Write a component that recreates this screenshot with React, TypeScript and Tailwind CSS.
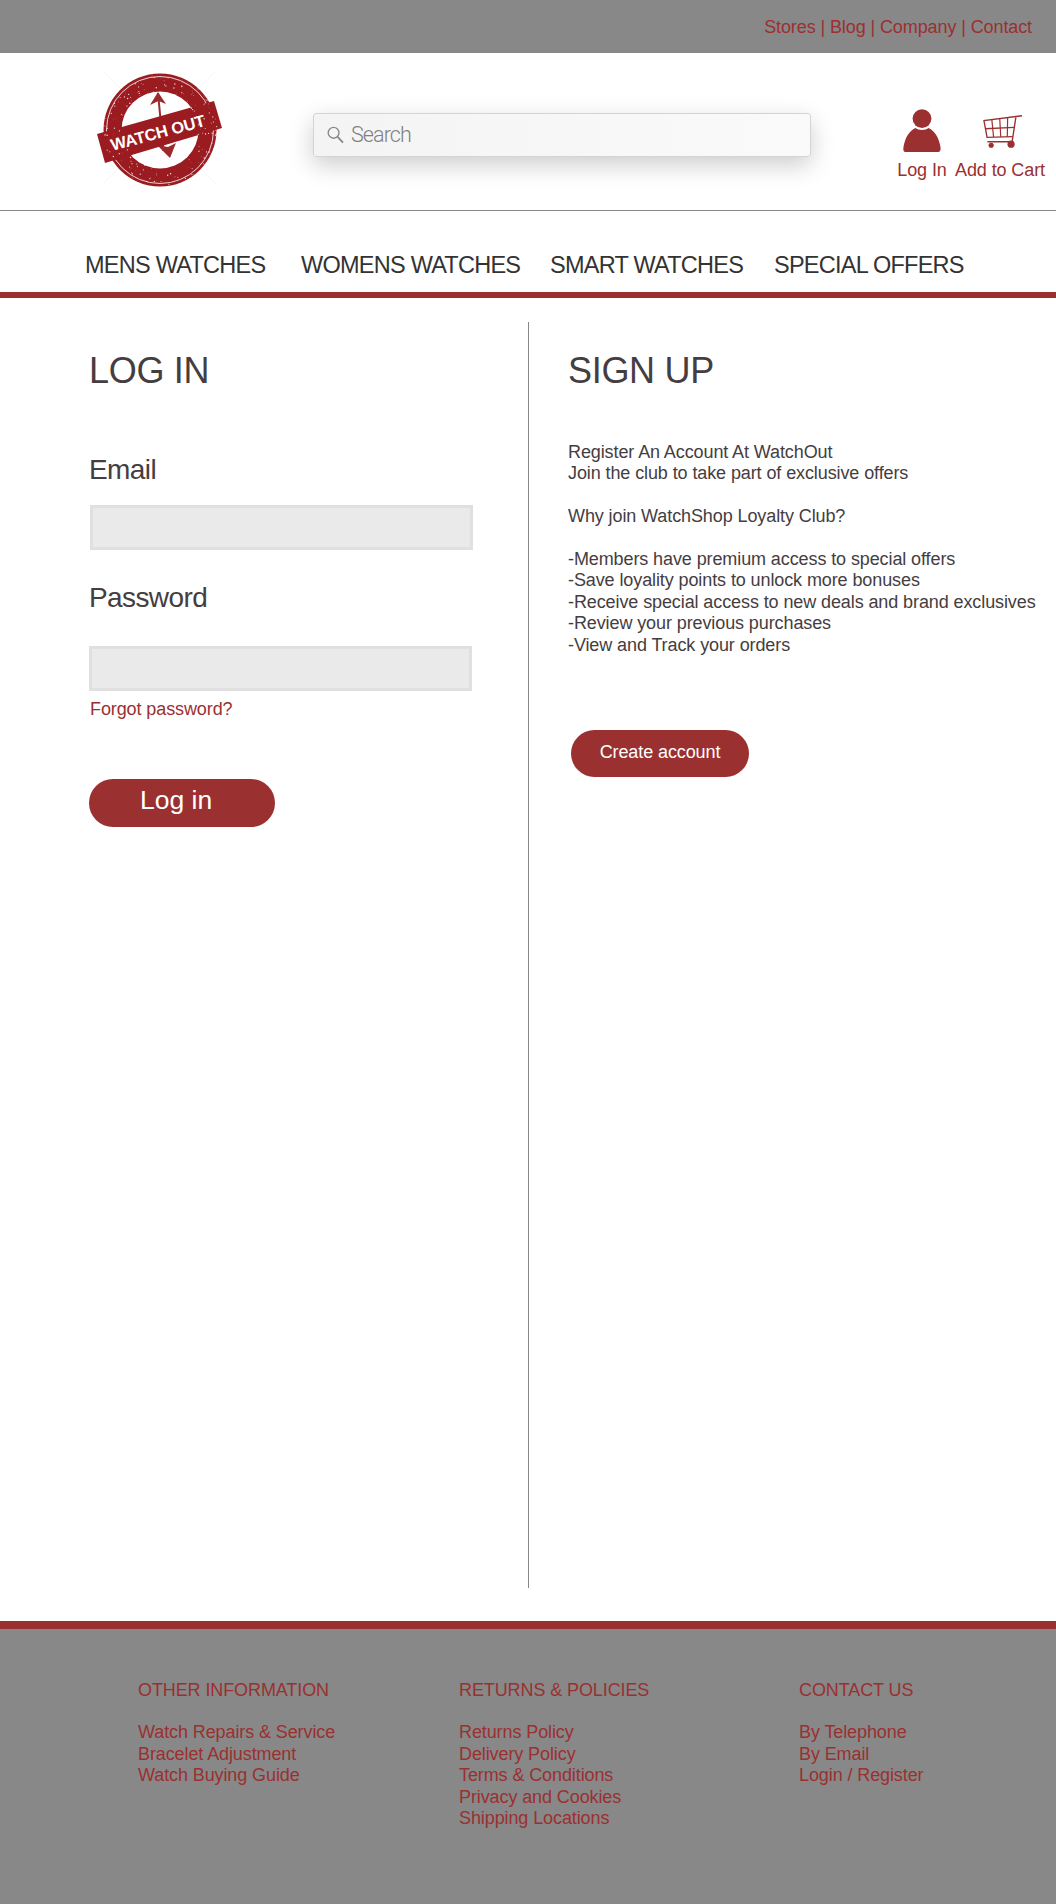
const font = "font-['Liberation_Sans',Arial,sans-serif]";

function seeded(n: number) {
  let s = 7919;
  const out: number[][] = [];
  for (let i = 0; i < n; i++) {
    s = (s * 16807) % 2147483647;
    const a = (s % 6283) / 1000;
    s = (s * 16807) % 2147483647;
    const r = 38 + (s % 1900) / 100;
    s = (s * 16807) % 2147483647;
    out.push([160 + Math.cos(a) * r, 129 + Math.sin(a) * r, 0.2 + (s % 55) / 100]);
  }
  return out;
}

function Logo() {
  const specks = seeded(170);
  return (
    <svg width="140" height="140" viewBox="90 60 140 140" className="shrink-0">
      <path d="M104 71 L215 182 M215 71 L104 182" stroke="#f5f5f5" strokeWidth="1" />
      <circle cx="160" cy="129" r="56.5" fill="#9a1c20" />
      <circle cx="160" cy="129" r="53.5" fill="none" stroke="#fff" strokeWidth="0.8" />
      <circle cx="160" cy="129" r="38.5" fill="#fff" />
      <path d="M158 92 L163.5 150" stroke="#9a2a2c" strokeWidth="2" />
      <path d="M158 91 L166 103 L158.5 100 L150 104 Z" fill="#9a2a2c" />
      <path d="M170 157 L157 144 L168 146 L176 142 Z" fill="#9a2a2c" />
      <path d="M97 133 L214 100 L222 127 L105 162 Z" fill="#9a1c20" />
      {specks.map((p, i) => (
        <circle key={i} cx={p[0]} cy={p[1]} r={p[2]} fill="#fff" opacity="0.85" />
      ))}
      <text
        x="158"
        y="137.5"
        textAnchor="middle"
        transform="rotate(-15 158 132)"
        fill="#fff"
        fontFamily="'Liberation Sans', Arial, sans-serif"
        fontWeight="700"
        fontSize="16.5"
        textLength="97"
        lengthAdjust="spacing"
      >
        WATCH OUT
      </text>
    </svg>
  );
}

function UserIcon() {
  return (
    <svg width="38" height="44" viewBox="0 0 38 44" fill="#9b3030">
      <circle cx="19" cy="9.6" r="9.4" />
      <path d="M3 43 C0.5 43 0 41 0.5 38 C2 29 6 22 12.5 19 C15 21.5 23 21.5 25.5 19 C32 22 36 29 37.5 38 C38 41 37 43 35 43 Z" />
    </svg>
  );
}

function CartIcon() {
  return (
    <svg width="44" height="36" viewBox="305 60 125 105" fill="none" stroke="#9b3030" strokeWidth="4">
      <path d="M423 65 L312 79 L321 128 L396 126" />
      <path d="M405 70 L394 141 L322 141" />
      <path d="M315 103 L400 99" />
      <path d="M335 77 L340 127 M358 74 L361 127 M381 71 L380 127" strokeWidth="3.5" />
      <circle cx="333" cy="151" r="7.5" fill="#9b3030" stroke="none" />
      <circle cx="391" cy="148" r="10.5" fill="#9b3030" stroke="none" />
    </svg>
  );
}

function SearchIcon() {
  return (
    <svg width="17" height="18" viewBox="0 0 17 18" fill="none" stroke="#8a8a8a" strokeWidth="1.4">
      <circle cx="6.6" cy="6.8" r="5.4" />
      <path d="M10.6 10.8 L16 16.6" strokeWidth="1.9" />
    </svg>
  );
}

const footerCols = [
  { title: "OTHER INFORMATION", width: "w-[321px]", links: ["Watch Repairs & Service", "Bracelet Adjustment", "Watch Buying Guide"] },
  { title: "RETURNS & POLICIES", width: "w-[340px]", links: ["Returns Policy", "Delivery Policy", "Terms & Conditions", "Privacy and Cookies", "Shipping Locations"] },
  { title: "CONTACT US", width: "w-[200px]", links: ["By Telephone", "By Email", "Login / Register"] },
];

export default function App() {
  return (
    <div className={`w-[1056px] h-[1904px] bg-white overflow-hidden ${font}`}>
      {/* top links */}
      <div className="h-[53px] bg-[#888888] flex items-center justify-end pr-6 pt-0.5 text-[18px] tracking-[-0.1px] text-[#9b3030]">
        Stores | Blog | Company | Contact
      </div>

      {/* header */}
      <header className="h-[158px] border-b border-[#888888] flex items-start pl-[90px]">
        <div className="mt-2">
          <Logo />
        </div>
        <div className="ml-[83px] mt-[60px] w-[498px] h-[44px] rounded-[3px] border border-[#d4d4d4] bg-gradient-to-r from-[#f4f4f4] to-[#fafafa] shadow-[0_8px_24px_rgba(0,0,0,0.2)] flex items-center pl-[13px] gap-[7px]">
          <SearchIcon />
          <span className="font-['Roboto',sans-serif] font-light text-[21.5px] tracking-[-0.9px] text-[#808080]">Search</span>
        </div>
        <div className="ml-[87px] mt-[56px] flex gap-[9px] text-[18px] tracking-[-0.1px] leading-[22px] text-[#9b3030] text-center">
          <div className="w-[48px] flex flex-col items-center">
            <UserIcon />
            <span className="mt-[6px] whitespace-nowrap">Log In</span>
          </div>
          <div className="w-[90px] flex flex-col items-center">
            <div className="h-[44px] pt-[5px] pl-[6px]">
              <CartIcon />
            </div>
            <span className="mt-[6px] whitespace-nowrap">Add to Cart</span>
          </div>
        </div>
      </header>

      {/* nav */}
      <nav className="h-[87px] border-b-[6px] border-[#9b3030] pl-[85px] pt-10 text-[23.5px] tracking-[-0.75px] leading-7 text-[#333333] flex whitespace-nowrap">
        <a className="w-[216px]">MENS WATCHES</a>
        <a className="w-[249px]">WOMENS WATCHES</a>
        <a className="w-[224px]">SMART WATCHES</a>
        <a>SPECIAL OFFERS</a>
      </nav>

      {/* main */}
      <main className="h-[1323px] pt-6 flex items-start text-[#453d3f]">
        <section className="w-[529px] h-[1266px] border-r border-[#888888] pl-[89px] pt-[27px]">
          <h1 className="text-[36px] tracking-[-0.3px] leading-[44px]">LOG IN</h1>
          <label className="block mt-[61px] text-[28px] tracking-[-0.6px] leading-8">Email</label>
          <div className="ml-px mt-[19px] w-[383px] h-[45px] bg-[#eaeaea] border-[3px] border-[#e0e0e0]" />
          <label className="block mt-8 text-[28px] tracking-[-0.6px] leading-8">Password</label>
          <div className="mt-8 w-[383px] h-[45px] bg-[#eaeaea] border-[3px] border-[#e0e0e0]" />
          <a className="block mt-1.5 pl-px text-[18px] tracking-[-0.1px] leading-6 text-[#9b3030]">Forgot password?</a>
          <button className="mt-[58px] w-[186px] h-12 rounded-full bg-[#9b3030] text-white text-[26.5px] text-left pl-[51px] pb-1">
            Log in
          </button>
        </section>
        <section className="pl-[39px] pt-[27px]">
          <h1 className="text-[36px] tracking-[-0.3px] leading-[44px]">SIGN UP</h1>
          <div className="mt-[49px] text-[18px] tracking-[-0.1px] leading-[21.4px] whitespace-pre">
            {"Register An Account At WatchOut\nJoin the club to take part of exclusive offers\n\nWhy join WatchShop Loyalty Club?\n\n-Members have premium access to special offers\n-Save loyality points to unlock more bonuses\n-Receive special access to new deals and brand exclusives\n-Review your previous purchases\n-View and Track your orders"}
          </div>
          <button className="block mt-[74px] ml-[3px] w-[178px] h-[47px] rounded-full bg-[#9b3030] text-white text-[18px] tracking-[-0.1px] pb-0.5">
            Create account
          </button>
        </section>
      </main>

      {/* footer */}
      <footer className="h-[283px] border-t-8 border-[#9b3030] bg-[#888888] pl-[138px] pt-[51px] flex text-[18px] tracking-[-0.1px] leading-[21.4px] text-[#9b3030]">
        {footerCols.map((col) => (
          <div key={col.title} className={col.width}>
            <div className="mb-[21px]">{col.title}</div>
            {col.links.map((l) => (
              <div key={l}>{l}</div>
            ))}
          </div>
        ))}
      </footer>
    </div>
  );
}
